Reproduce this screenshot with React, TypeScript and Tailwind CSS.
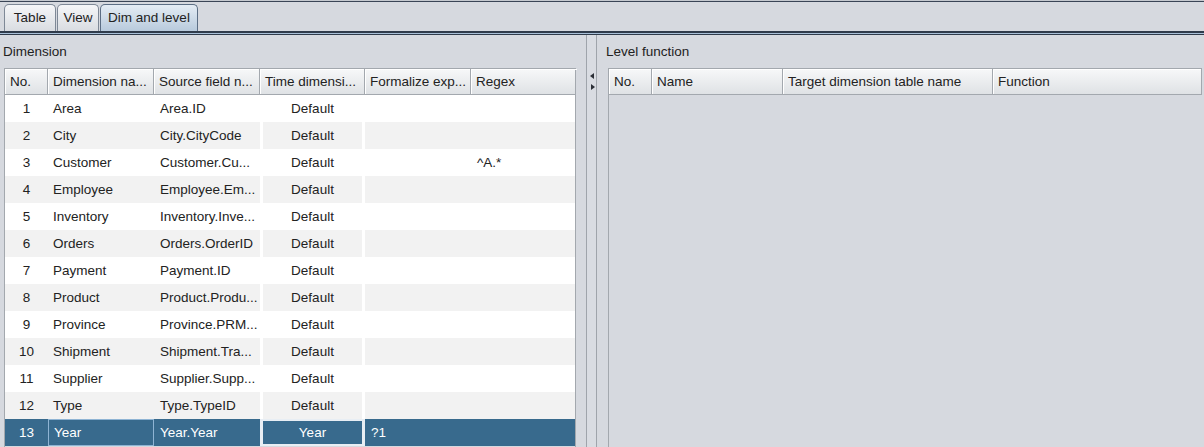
import React from "react";

const rows = [
  ["1", "Area", "Area.ID", "Default", "", ""],
  ["2", "City", "City.CityCode", "Default", "", ""],
  ["3", "Customer", "Customer.Cu...", "Default", "", "^A.*"],
  ["4", "Employee", "Employee.Em...", "Default", "", ""],
  ["5", "Inventory", "Inventory.Inve...", "Default", "", ""],
  ["6", "Orders", "Orders.OrderID", "Default", "", ""],
  ["7", "Payment", "Payment.ID", "Default", "", ""],
  ["8", "Product", "Product.Produ...", "Default", "", ""],
  ["9", "Province", "Province.PRM...", "Default", "", ""],
  ["10", "Shipment", "Shipment.Tra...", "Default", "", ""],
  ["11", "Supplier", "Supplier.Supp...", "Default", "", ""],
  ["12", "Type", "Type.TypeID", "Default", "", ""],
  ["13", "Year", "Year.Year", "Year", "?1", ""],
];

const leftCols = [
  { name: "No.", w: "w-[43px]" },
  { name: "Dimension na...", w: "w-[106px]" },
  { name: "Source field n...", w: "w-[106px]" },
  { name: "Time dimensi...", w: "w-[105px]" },
  { name: "Formalize exp...", w: "w-[106px]" },
  { name: "Regex", w: "w-[106px]" },
];

const rightCols = [
  { name: "No.", w: "w-[43px]" },
  { name: "Name", w: "w-[131px]" },
  { name: "Target dimension table name", w: "w-[210px]" },
  { name: "Function", w: "flex-1" },
];

function Header({ cols }: { cols: { name: string; w: string }[] }) {
  return (
    <div className="flex h-[27px] shrink-0 border border-[#a3a8ae] bg-gradient-to-b from-[#f7f8f9] to-[#dfe2e5]">
      {cols.map((c, i) => (
        <div
          key={i}
          className={`${c.w} shrink-0 flex items-center pl-[5px] pt-[1px] whitespace-nowrap overflow-hidden border-r border-[#a3a8ae] last:border-r-0 shadow-[inset_1px_1px_0_#ffffff]`}
        >
          {c.name}
        </div>
      ))}
    </div>
  );
}

function Tab({ label, w, selected }: { label: string; w: string; selected?: boolean }) {
  return (
    <div
      className={`${w} h-[27px] flex items-center justify-center pt-[1px] rounded-t-[5px] border border-b-0 ${
        selected
          ? "border-[#5c6e84] bg-gradient-to-b from-[#e4ecf4] to-[#b8cadc]"
          : "border-[#7e8896] bg-gradient-to-b from-[#f5f6f8] to-[#d9dce1]"
      }`}
    >
      {label}
    </div>
  );
}

export default function App() {
  return (
    <div className="w-[1204px] h-[447px] overflow-hidden bg-[#d6d9df] font-['Liberation_Sans',Arial,sans-serif] text-[13.5px] text-[#222] flex flex-col">
      {/* tab strip */}
      <div className="h-[1px] bg-[#c5c9cf]" />
      <div className="h-[1px] bg-[#3a4556]" />
      <div className="h-[29px] flex items-end pl-[4px] gap-[1px]">
        <Tab label="Table" w="w-[52px]" />
        <Tab label="View" w="w-[42px]" />
        <Tab label="Dim and level" w="w-[98px]" selected />
      </div>
      <div className="h-[2px] bg-[#2f3b4b]" />
      <div className="h-[1px] bg-[#a9c0d8]" />
      <div className="h-[1px] bg-[#2f3b4b]" />

      <div className="flex flex-1 min-h-0">
        {/* left panel */}
        <div className="w-[578px] shrink-0 flex flex-col">
          <div className="h-[33px] shrink-0 flex items-center pl-[3px] pt-[1px]">Dimension</div>
          <div className="ml-[4px] w-[572px] flex flex-col flex-1 min-h-0">
            <Header cols={leftCols} />
            <div className="flex flex-col border-x border-[#a3a8ae] flex-1">
              {rows.map((r, i) => {
                const sel = i === 12;
                const bg = sel ? "bg-[#386a8d] text-white" : i % 2 === 0 ? "bg-white" : "bg-[#f2f2f2]";
                return (
                  <div key={i} className={`flex h-[27px] shrink-0 ${bg}`}>
                    <div className="w-[43px] shrink-0 flex items-center justify-center pt-[1px]">{r[0]}</div>
                    <div
                      className={`w-[106px] shrink-0 flex items-center pl-[5px] pt-[1px] ${
                        sel ? "border border-[#8fb4d4]" : ""
                      }`}
                    >
                      {r[1]}
                    </div>
                    <div className="w-[106px] shrink-0 flex items-center pl-[6px] pt-[1px] whitespace-nowrap overflow-hidden">
                      {r[2]}
                    </div>
                    <div className={`w-[105px] shrink-0 flex px-[3px] ${sel ? "bg-[#e8eef4] py-[2px]" : "bg-white"}`}>
                      <div
                        className={`flex-1 flex items-center justify-center pt-[1px] ${
                          sel ? "bg-[#386a8d]" : i % 2 === 0 ? "bg-white" : "bg-[#f2f2f2]"
                        }`}
                      >
                        {r[3]}
                      </div>
                    </div>
                    <div className="w-[106px] shrink-0 flex items-center pl-[6px] pt-[1px]">{r[4]}</div>
                    <div className="w-[106px] shrink-0 flex items-center pl-[6px] pt-[1px]">{r[5]}</div>
                  </div>
                );
              })}
            </div>
          </div>
        </div>

        {/* splitter */}
        <div className="w-[28px] shrink-0 flex">
          <div className="w-[8px]" />
          <div className="w-[11px] border-l border-r border-[#9fa4ab] relative bg-[#d9dce2]">
            <div className="absolute left-[3px] top-[38px] w-0 h-0 border-y-[3px] border-y-transparent border-r-[4px] border-r-[#2b2f36]" />
            <div className="absolute left-[4px] top-[49px] w-0 h-0 border-y-[3px] border-y-transparent border-l-[4px] border-l-[#2b2f36]" />
          </div>
          <div className="flex-1" />
        </div>

        {/* right panel */}
        <div className="flex-1 flex flex-col min-w-0">
          <div className="h-[33px] shrink-0 flex items-center pl-0 pt-[1px]">Level function</div>
          <div className="ml-[2px] mr-[2px] flex flex-col flex-1 min-h-0">
            <Header cols={rightCols} />
            <div className="flex-1 border-l border-[#a3a8ae] bg-[#d6d9df]" />
          </div>
        </div>
      </div>
    </div>
  );
}
